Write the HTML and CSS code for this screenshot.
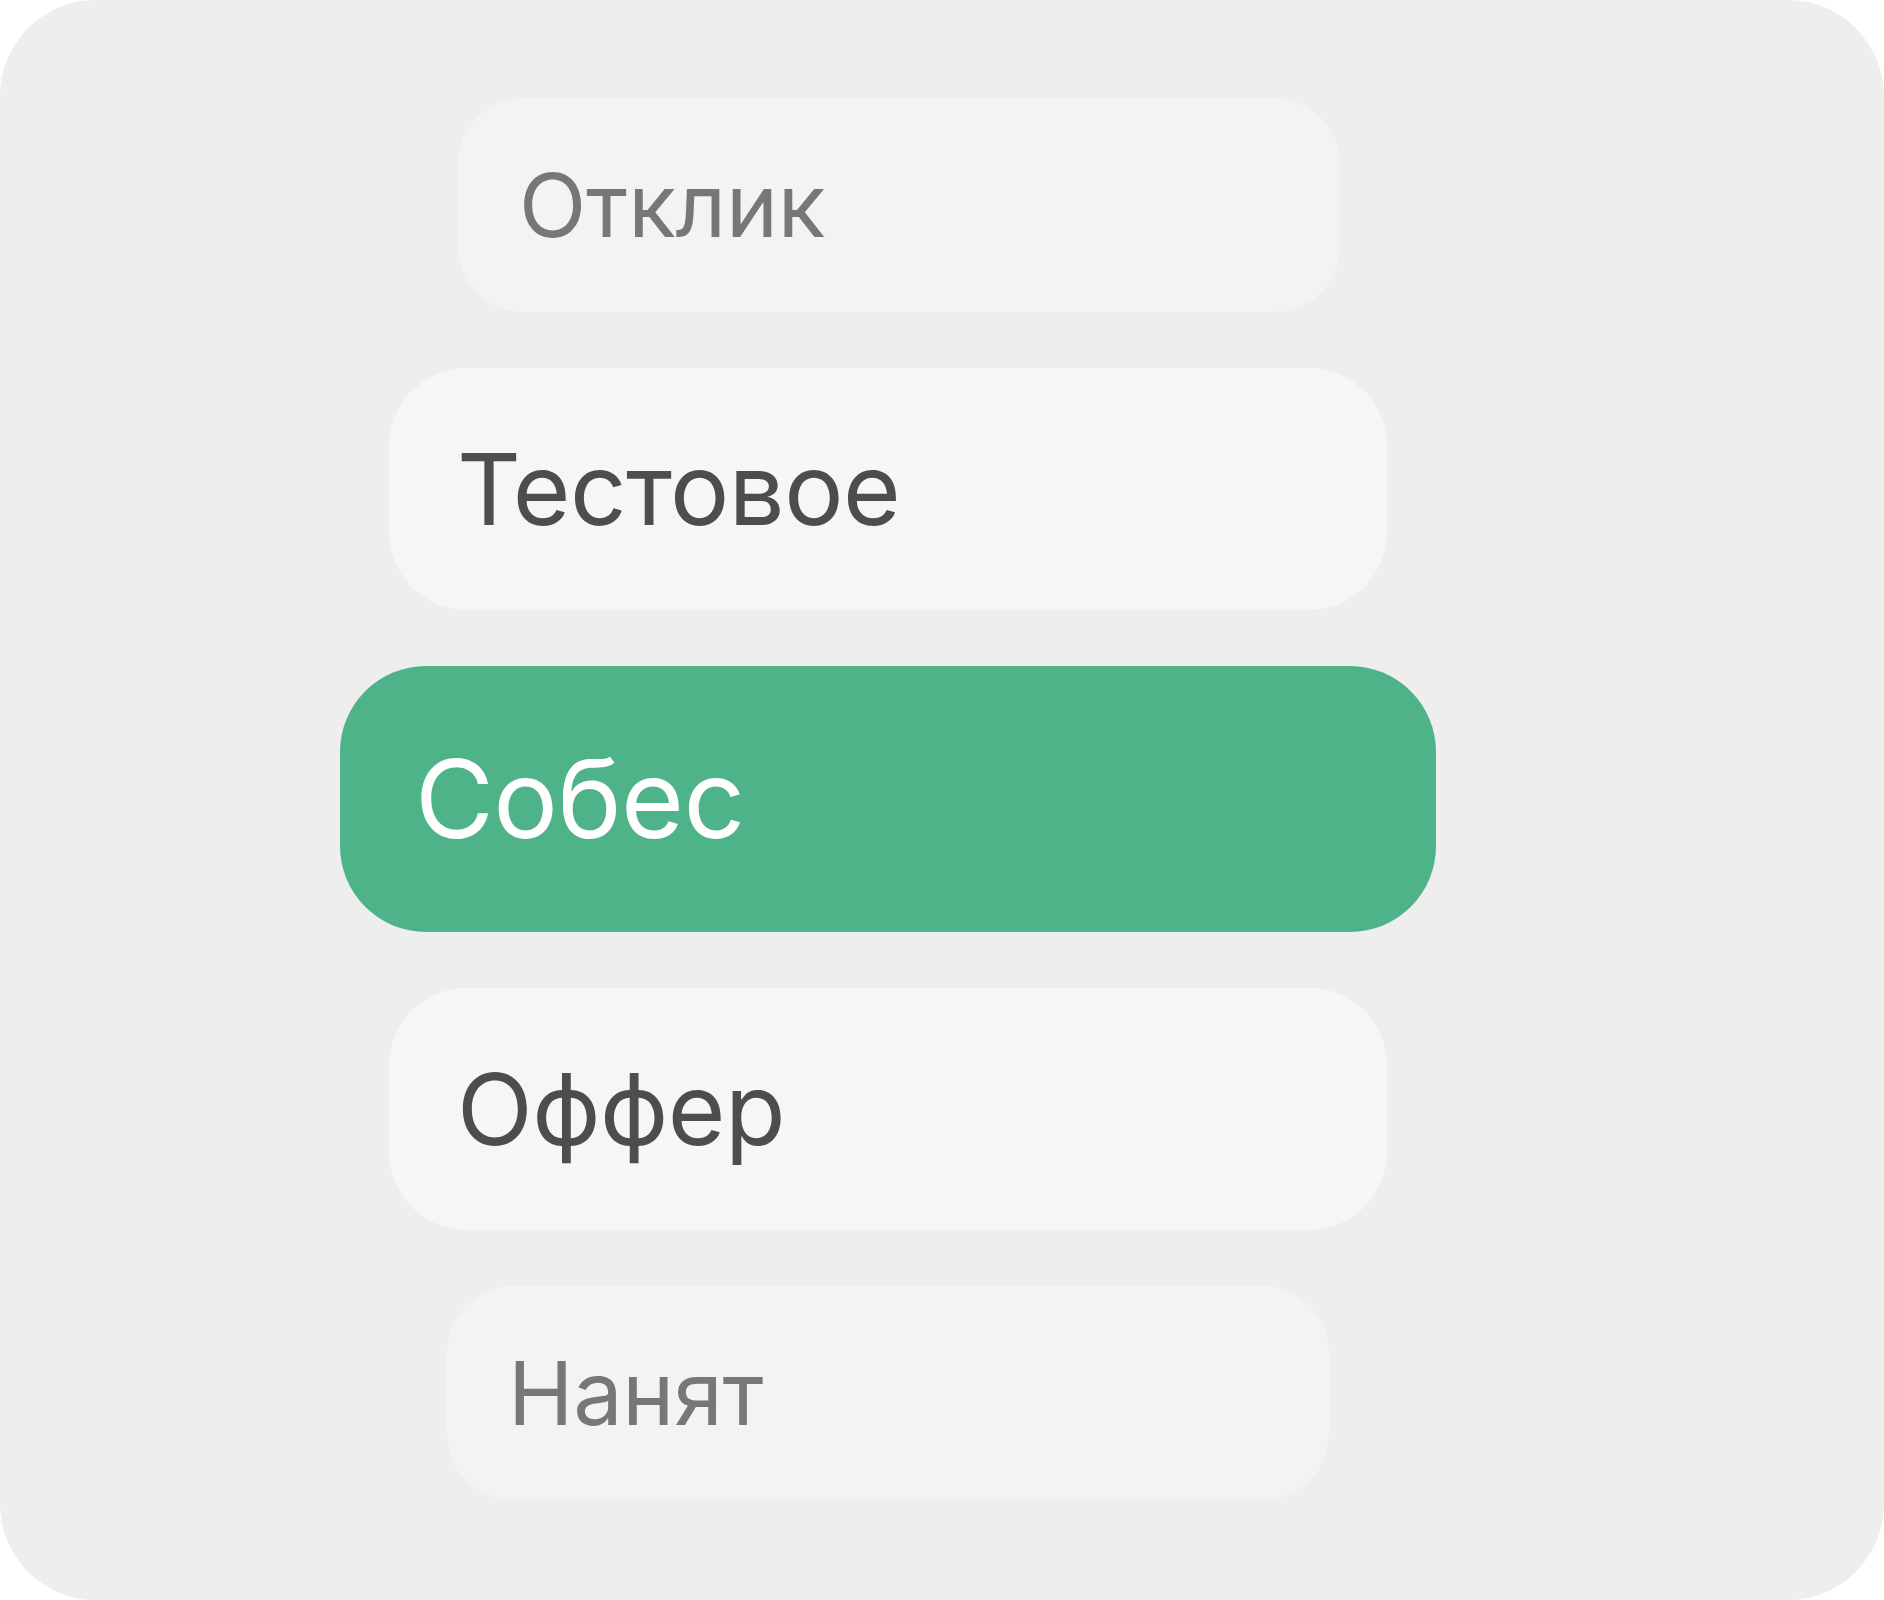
FILE: index.html
```html
<!DOCTYPE html>
<html lang="ru">

<head>
    <meta charset="UTF-8">
    <meta name="viewport" content="width=device-width, initial-scale=1.0">
    <title>Этапы найма</title>
    <link rel="stylesheet" href="styles.css">
</head>

<body>
    <div class="panel">
        <ul class="stages">
            <li class="stage stage-far stage-first">Отклик</li>
            <li class="stage stage-near">Тестовое</li>
            <li class="stage stage-current">Собес</li>
            <li class="stage stage-near">Оффер</li>
            <li class="stage stage-far">Нанят</li>
        </ul>
    </div>
</body>

</html>
```

FILE: styles.css
```css
:root {
    --panel-bg: #eeeeee;
    /* фон панели */
    --far-bg: #f3f3f3;
    --near-bg: #f6f6f6;
    --accent: #4fb38a;
    /* текущий этап */
    --far-text: #777777;
    --near-text: #4d4d4d;
}

body {
    margin: 0;
    background: #ffffff;
    font-family: Inter, "Noto Sans", sans-serif;
}

.panel {
    width: 1884px;
    height: 1600px;
    box-sizing: border-box;
    padding: 98px 108px 98px 0;
    background: var(--panel-bg);
    border-radius: 96px;
}

.stages {
    list-style: none;
    margin: 0;
    padding: 0;
    display: flex;
    flex-direction: column;
    align-items: center;
    gap: 56px;
}

.stage {
    box-sizing: border-box;
    display: flex;
    align-items: center;
    font-weight: 400;
    line-height: 1;
}

.stage-far {
    width: 882px;
    height: 214px;
    padding-left: 61px;
    border-radius: 66px;
    background: var(--far-bg);
    color: var(--far-text);
    font-size: 88px;
    letter-spacing: -0.003em;
}

.stage-first {
    margin-left: 22px;
}

.stage-near {
    width: 998px;
    height: 242px;
    padding-left: 68px;
    border-radius: 78px;
    background: var(--near-bg);
    color: var(--near-text);
    font-size: 99px;
    letter-spacing: -0.005em;
}

.stage-current {
    width: 1096px;
    height: 266px;
    padding-left: 75px;
    border-radius: 86px;
    background: var(--accent);
    color: #ffffff;
    font-size: 108px;
    letter-spacing: -0.005em;
}
```
